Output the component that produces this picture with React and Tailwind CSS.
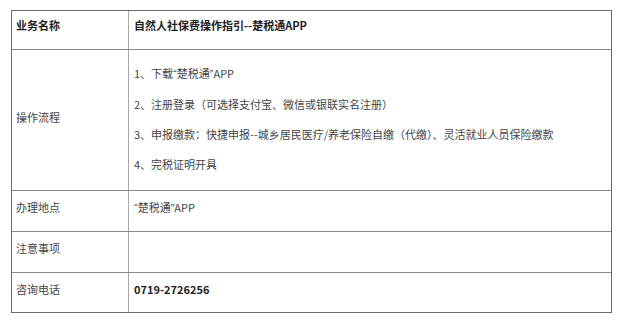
import React from 'react';

const font = "font-['Noto_Sans_CJK_SC','Noto_Sans',sans-serif]";

// narrow latin quotes, as in the original page
const Q = ({ children }) => <span className="font-['Liberation_Sans',sans-serif]">{children}</span>;

const steps = [
  <>1、下载<Q>“</Q>楚税通<Q>”</Q>APP</>,
  '2、注册登录（可选择支付宝、微信或银联实名注册）',
  '3、申报缴款：快捷申报--城乡居民医疗/养老保险自缴（代缴）、灵活就业人员保险缴款',
  '4、完税证明开具',
];

function Row({ label, children, height, pad = 'pt-[8px]', bold = false, last = false, labelPad }) {
  return (
    <div className={`flex ${height} ${last ? '' : 'border-b border-[#8a8a8a]'}`}>
      <div
        className={`w-[117px] shrink-0 border-r border-[#a8a8a8] pl-[4px] ${labelPad || pad} ${
          bold ? 'font-bold text-[#222]' : 'text-[#444]'
        }`}
      >
        {label}
      </div>
      <div className={`flex-1 pl-[5px] ${pad} ${bold ? 'font-bold text-[#222]' : 'text-[#444]'}`}>
        {children}
      </div>
    </div>
  );
}

export default function App() {
  return (
    <div className={`w-[620px] h-[329px] bg-white pt-[10px] pl-[11px] ${font} text-[11px] leading-[16px]`}>
      <div className="w-[601px] border border-[#6a6a6a]">
        <Row label="业务名称" height="h-[39px]" pad="pt-[6px]" bold>
          自然人社保费操作指引--楚税通APP
        </Row>
        <Row label="操作流程" height="h-[141px]" pad="pt-[15px]" labelPad="pt-[59px]">
          <div className="flex flex-col gap-[14px]">
            {steps.map((s, i) => (
              <p key={i}>{s}</p>
            ))}
          </div>
        </Row>
        <Row label="办理地点" height="h-[41px]">
          <Q>“</Q>楚税通<Q>”</Q>APP
        </Row>
        <Row label="注意事项" height="h-[41px]">
          {''}
        </Row>
        <Row label="咨询电话" height="h-[39px]" last>
          <span className="font-bold text-[#222]">0719-2726256</span>
        </Row>
      </div>
    </div>
  );
}
